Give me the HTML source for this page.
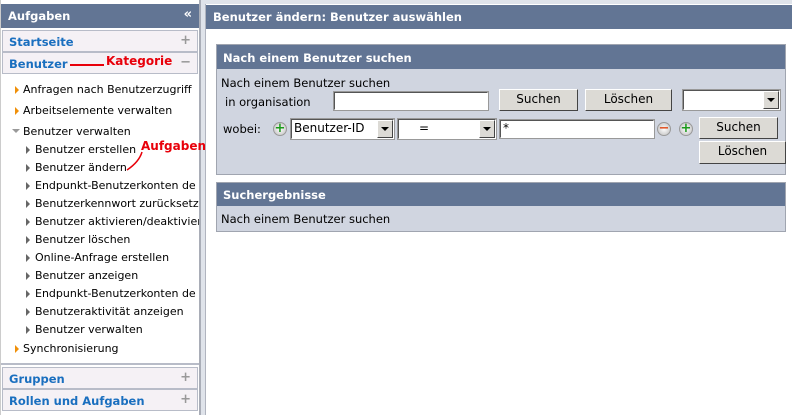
<!DOCTYPE html>
<html><head><meta charset="utf-8"><style>
*{margin:0;padding:0;box-sizing:border-box}
body{width:792px;height:415px;overflow:hidden;background:#dfe3ea;font-family:"DejaVu Sans",Verdana,sans-serif;font-size:11px;color:#000;position:relative}
.a{position:absolute;white-space:nowrap}
.hdr{background:#627594;color:#fff;font-weight:bold}
.cat{position:absolute;left:2px;width:196px;height:22px;background:#f5f1f5;border:1px solid #b8bcc8;color:#1a6fbf;font-weight:bold;font-size:11.5px;padding:4px 0 0 6px}
.pm{position:absolute;right:6px;top:2px;color:#999;font-weight:bold;font-size:13px}
.tri{position:absolute;width:0;height:0;border-top:4px solid transparent;border-bottom:4px solid transparent;border-left:4px solid #f0900a}
.gt{border-left-color:#666}
.btn{position:absolute;background:#dcdad5;border:1px solid;border-color:#fff #444 #444 #fff;text-align:center;font-size:12px;padding-top:2px}
.inp{position:absolute;background:#fff;border:1px solid;border-color:#555 #fff #fff #555;outline:1px solid #999;font-size:12px;padding-left:2px}
.dd{position:absolute;right:0;top:0;width:16px;height:100%;background:#dcdad5;border:1px solid;border-color:#fff #444 #444 #fff}
.dd:after{content:"";position:absolute;left:3px;top:6px;border-left:4px solid transparent;border-right:4px solid transparent;border-top:4px solid #000}
.circ{position:absolute;width:14px;height:14px;border-radius:50%;background:radial-gradient(#fff,#bbb);border:1px solid #999;font-weight:bold;text-align:center;line-height:12px;font-size:13px}
.red{color:#e8000a;font-weight:bold;font-size:12px}
</style></head><body>
<div class="a" style="left:0;top:0;width:201px;height:415px;background:#fff;border-right:2px solid #a9adb7;border-left:1px solid #ccc"></div>
<div class="a hdr" style="left:1px;top:4px;width:198px;height:24px;padding:5px 0 0 7px;font-size:11.5px">Aufgaben<span style="position:absolute;right:7px;top:3px;font-size:13px">«</span></div>
<div class="cat" style="top:30px">Startseite<span class="pm">+</span></div>
<div class="cat" style="top:52px">Benutzer<span class="pm">−</span></div>
<div class="a" style="left:70px;top:64px;width:34px;height:2px;background:#e8000a"></div>
<div class="a red" style="left:106px;top:54px">Kategorie</div>
<div class="tri" style="left:15px;top:86px"></div><div class="a" style="left:23px;top:83px">Anfragen nach Benutzerzugriff</div>
<div class="tri" style="left:15px;top:107px"></div><div class="a" style="left:23px;top:104px">Arbeitselemente verwalten</div>
<div class="a" style="left:12px;top:129px;border-left:4px solid transparent;border-right:4px solid transparent;border-top:4px solid #999"></div><div class="a" style="left:23px;top:125px">Benutzer verwalten</div>
<div style="position:absolute;left:0;top:143px;width:199px;height:200px;overflow:hidden">
<div class="tri gt" style="left:26px;top:3px"></div><div class="a" style="left:35px;top:0">Benutzer erstellen</div>
<div class="tri gt" style="left:26px;top:21px"></div><div class="a" style="left:35px;top:18px">Benutzer ändern</div>
<div class="tri gt" style="left:26px;top:39px"></div><div class="a" style="left:35px;top:36px">Endpunkt-Benutzerkonten de</div>
<div class="tri gt" style="left:26px;top:57px"></div><div class="a" style="left:35px;top:54px">Benutzerkennwort zurücksetzen</div>
<div class="tri gt" style="left:26px;top:75px"></div><div class="a" style="left:35px;top:72px">Benutzer aktivieren/deaktivieren</div>
<div class="tri gt" style="left:26px;top:93px"></div><div class="a" style="left:35px;top:90px">Benutzer löschen</div>
<div class="tri gt" style="left:26px;top:111px"></div><div class="a" style="left:35px;top:108px">Online-Anfrage erstellen</div>
<div class="tri gt" style="left:26px;top:129px"></div><div class="a" style="left:35px;top:126px">Benutzer anzeigen</div>
<div class="tri gt" style="left:26px;top:147px"></div><div class="a" style="left:35px;top:144px">Endpunkt-Benutzerkonten de</div>
<div class="tri gt" style="left:26px;top:165px"></div><div class="a" style="left:35px;top:162px">Benutzeraktivität anzeigen</div>
<div class="tri gt" style="left:26px;top:183px"></div><div class="a" style="left:35px;top:180px">Benutzer verwalten</div>
</div>
<div class="a red" style="left:141px;top:139px">Aufgaben</div>
<svg class="a" style="left:125px;top:150px" width="20" height="22"><path d="M17 2 Q14 12 2 20" stroke="#e8000a" stroke-width="1.5" fill="none"/></svg>
<div class="tri" style="left:15px;top:345px"></div><div class="a" style="left:23px;top:342px">Synchronisierung</div>
<div class="a" style="left:1px;top:363px;width:198px;height:2px;background:#b8bcc8"></div>
<div class="cat" style="top:367px">Gruppen<span class="pm">+</span></div>
<div class="cat" style="top:389px">Rollen und Aufgaben<span class="pm">+</span></div>
<div class="a" style="left:205px;top:4px;width:587px;height:411px;background:#fff;border-left:1px solid #b0b4bf"></div>
<div class="a hdr" style="left:206px;top:5px;width:586px;height:24px;padding:5px 0 0 7px;font-size:11.5px">Benutzer ändern: Benutzer auswählen</div>
<div class="a" style="left:216px;top:44px;width:570px;height:131px;background:#d0d5e0;border:1px solid #a0a5b0"></div>
<div class="a hdr" style="left:217px;top:45px;width:568px;height:24px;padding:6px 0 0 6px;font-size:11.5px">Nach einem Benutzer suchen</div>
<div class="a" style="left:221px;top:76px;font-size:11.5px">Nach einem Benutzer suchen</div>
<div class="a" style="left:225px;top:95px;font-size:11.5px">in organisation</div>
<div class="inp" style="left:334px;top:92px;width:154px;height:18px"></div>
<div class="btn" style="left:499px;top:89px;width:79px;height:22px">Suchen</div>
<div class="btn" style="left:585px;top:89px;width:87px;height:22px">Löschen</div>
<div class="inp" style="left:683px;top:90px;width:97px;height:20px"><div class="dd"></div></div>
<div class="a" style="left:223px;top:122px;font-size:11.5px">wobei:</div>
<div class="circ" style="left:273px;top:122px;color:#1a9a1a">+</div>
<div class="inp" style="left:291px;top:119px;width:103px;height:20px;padding-top:1px">Benutzer-ID<div class="dd"></div></div>
<div class="inp" style="left:398px;top:119px;width:98px;height:20px;padding-left:20px;padding-top:1px">=<div class="dd"></div></div>
<div class="inp" style="left:500px;top:120px;width:154px;height:18px">*</div>
<div class="circ" style="left:657px;top:122px;color:#e05020">−</div>
<div class="circ" style="left:679px;top:122px;color:#1a9a1a">+</div>
<div class="btn" style="left:699px;top:117px;width:79px;height:22px">Suchen</div>
<div class="btn" style="left:699px;top:141px;width:87px;height:23px">Löschen</div>
<div class="a" style="left:216px;top:182px;width:570px;height:50px;background:#d0d5e0;border:1px solid #a0a5b0"></div>
<div class="a hdr" style="left:217px;top:183px;width:568px;height:23px;padding:5px 0 0 6px;font-size:11.5px">Suchergebnisse</div>
<div class="a" style="left:221px;top:212px;font-size:11.5px">Nach einem Benutzer suchen</div>
</body></html>
